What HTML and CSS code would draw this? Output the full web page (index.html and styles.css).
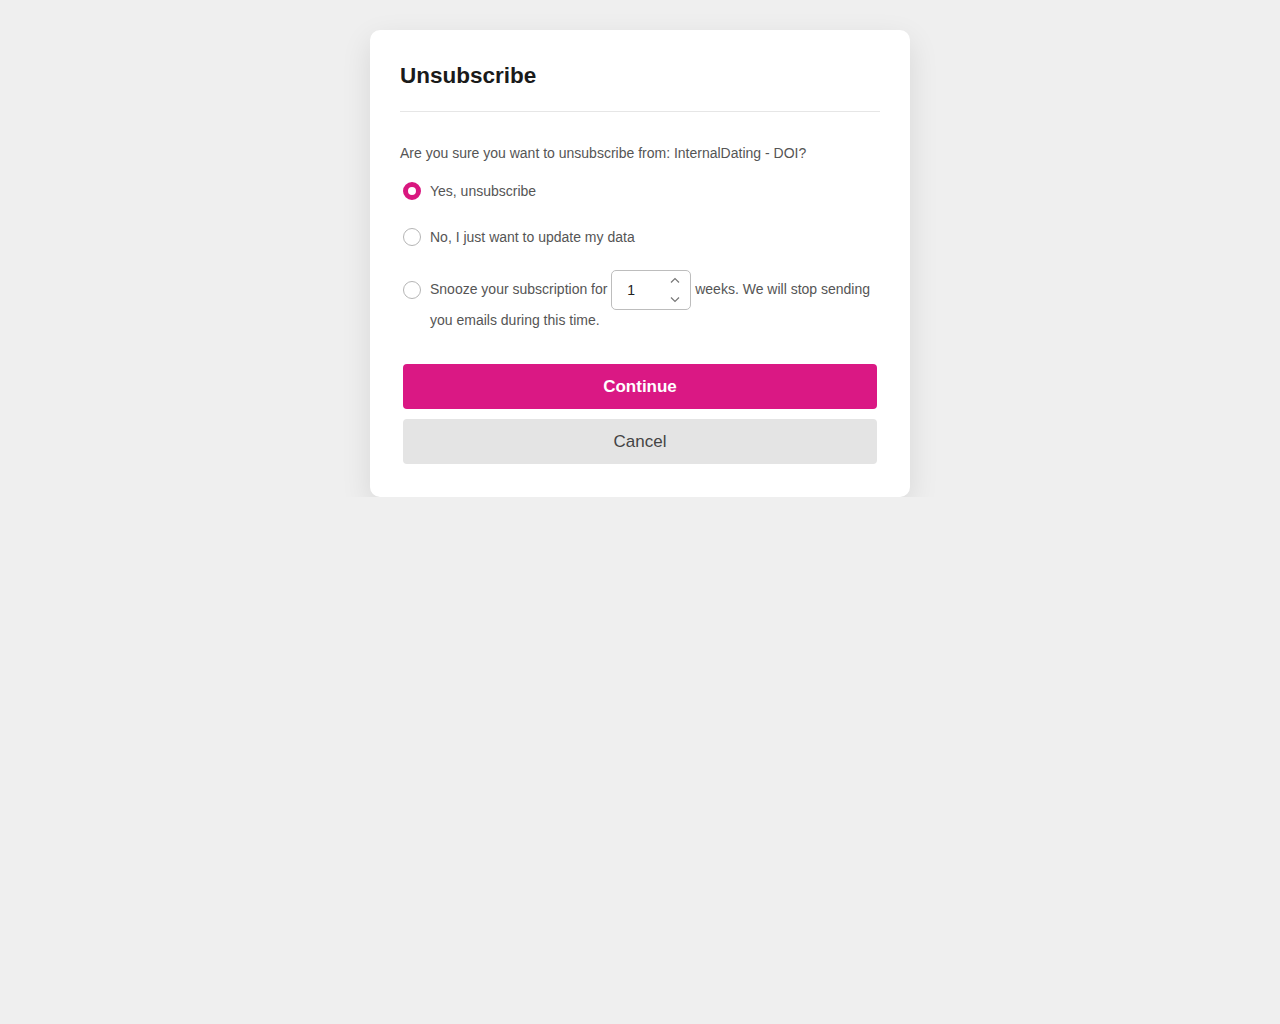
FILE: index.html
```html
<!DOCTYPE html>
<html lang="en">
<head>
  <meta charset="UTF-8" />
  <meta name="viewport" content="width=device-width, initial-scale=1" />
  <title>Unsubscribe</title>
  <link rel="stylesheet" href="styles.css">
</head>
<body>

<div class="card">
  <h1 class="card-title">Unsubscribe</h1>

  <form class="unsub-form">
    <p class="question">Are you sure you want to unsubscribe from: InternalDating - DOI?</p>

    <label class="option option-yes">
      <input type="radio" name="choice" value="yes" checked />
      <span class="option-text">Yes, unsubscribe</span>
    </label>

    <label class="option option-no">
      <input type="radio" name="choice" value="no" />
      <span class="option-text">No, I just want to update my data</span>
    </label>

    <label class="option option-snooze">
      <input type="radio" name="choice" value="snooze" />
      <span class="option-text">Snooze your subscription for <span class="weeks"><input type="number" value="1" min="1" /><svg class="spin" width="12" height="26" viewBox="0 0 12 26"><path d="M2 5.5 L6 1.5 L10 5.5" /><path d="M2 20.5 L6 24.5 L10 20.5" /></svg></span> weeks. We will stop sending you emails during this time.</span>
    </label>

    <div class="actions">
      <button type="button" class="btn btn-primary">Continue</button>
      <button type="button" class="btn btn-cancel">Cancel</button>
    </div>
  </form>
</div>

</body>
</html>
```

FILE: styles.css
```css
body {
  margin: 0;
  background: #efefef;
  font-family: "Liberation Sans", Arial, sans-serif;
  color: #555;
}
.card {
  width: 480px;
  margin: 30px auto 0;
  padding: 30px;
  background: #fff;
  border-radius: 10px;
  box-shadow: 0 10px 30px rgba(0, 0, 0, 0.1);
}
.card-title {
  margin: 0;
  padding: 3px 0 23px;
  border-bottom: 1px solid #e6e6e6;
  font-size: 22.5px;
  line-height: 25px;
  font-weight: bold;
  color: #1a1a1a;
}
.unsub-form {
  display: flex;
  flex-direction: column;
}
.question {
  margin: 31px 0 0;
  font-size: 14px;
  line-height: 20px;
}
.option {
  display: flex;
  align-items: flex-start;
  gap: 9px;
  font-size: 14px;
  line-height: 20px;
  cursor: pointer;
}
.option-yes {
  margin-top: 18px;
}
.option-no {
  margin-top: 26px;
}
.option-snooze {
  margin-top: 27px;
  line-height: 31px;
}
.option input[type="radio"] {
  appearance: none;
  -webkit-appearance: none;
  flex: none;
  width: 18px;
  height: 18px;
  margin: 1px 0 0 3px;
  border: 1px solid #b5b5b5;
  border-radius: 50%;
  background: #fff;
  box-sizing: border-box;
}
.option-snooze input[type="radio"] {
  margin-top: 6.5px;
}
.option input[type="radio"]:checked {
  border: 5.5px solid #d9177f;
}
.weeks {
  position: relative;
  display: inline-block;
  vertical-align: middle;
  margin: -5px 0;
}
.weeks input {
  display: block;
  width: 80px;
  height: 40px;
  box-sizing: border-box;
  padding: 0 15px;
  border: 1px solid #bdbdbd;
  border-radius: 5px;
  font-family: inherit;
  font-size: 14px;
  color: #222;
  -moz-appearance: textfield;
}
.weeks input::-webkit-inner-spin-button,
.weeks input::-webkit-outer-spin-button {
  -webkit-appearance: none;
  margin: 0;
}
.spin {
  position: absolute;
  right: 10px;
  top: 7px;
  fill: none;
  stroke: #777;
  stroke-width: 1.2;
}
.actions {
  display: flex;
  flex-direction: column;
  gap: 10px;
  margin: 28px 3px 3px;
}
.btn {
  height: 45px;
  border: none;
  border-radius: 4px;
  font-family: inherit;
  font-size: 17px;
  cursor: pointer;
}
.btn-primary {
  background: #da1884;
  color: #fff;
  font-weight: bold;
}
.btn-cancel {
  background: #e4e4e4;
  color: #444;
}
```
